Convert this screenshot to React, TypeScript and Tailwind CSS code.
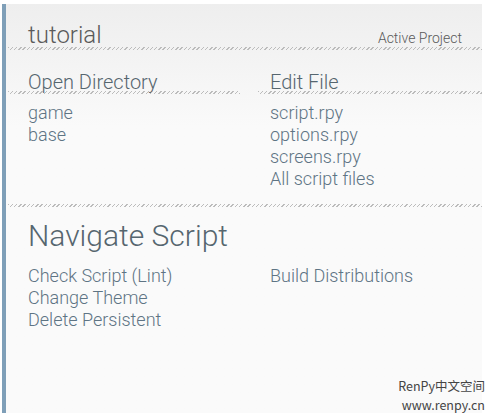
import React from "react";

const hatch =
  "h-[3px] bg-[repeating-linear-gradient(135deg,#bcbcbc_0px,#bcbcbc_1px,transparent_1px,transparent_3px)]";

export default function App() {
  const font = { fontFamily: "Roboto, 'Noto Sans', sans-serif" };
  return (
    <div className="w-[488px] h-[417px] bg-white relative overflow-hidden" style={font}>
      <div className="flex pt-[4px] pl-[2px]">
        <div className="w-[4px] h-[409px] bg-[#7f9fb8]" />
        <div className="w-[476px] h-[409px] bg-gradient-to-b from-[#eeeeee] to-[#fafafa] from-0% to-30% flex flex-col font-light">
          <div className="flex items-end justify-between pl-[22px] pr-[20px] h-[43px]">
            <span className="text-[24px] leading-[24px] text-[#5a5a5a]">tutorial</span>
            <span className="text-[14px] leading-[18px] text-[#5a5a5a]">Active Project</span>
          </div>
          <div className={`ml-[2px] ${hatch}`} />
          <div className="flex mt-[23px]">
            <div className="w-[244px] flex flex-col">
              <span className="pl-[22px] text-[20px] leading-[18px] text-[#56666f]">Open Directory</span>
              <div className={`ml-[2px] w-[232px] ${hatch}`} />
              <div className="pl-[22px] mt-[8px] flex flex-col text-[18px] leading-[22px] text-[#5e7484]">
                <span>game</span>
                <span>base</span>
              </div>
            </div>
            <div className="flex-1 flex flex-col">
              <span className="pl-[20px] text-[20px] leading-[18px] text-[#56666f]">Edit File</span>
              <div className={`ml-[8px] ${hatch}`} />
              <div className="pl-[20px] mt-[8px] flex flex-col text-[18px] leading-[22px] text-[#5e7484]">
                <span>script.rpy</span>
                <span>options.rpy</span>
                <span>screens.rpy</span>
                <span>All script files</span>
              </div>
            </div>
          </div>
          <div className={`mt-[14px] ml-[2px] ${hatch}`} />
          <span className="pl-[22px] mt-[12px] text-[30px] leading-[34px] text-[#56666f]">Navigate Script</span>
          <div className="flex mt-[12px] text-[18px] leading-[22px] text-[#5e7484]">
            <div className="w-[244px] pl-[22px] flex flex-col">
              <span>Check Script (Lint)</span>
              <span>Change Theme</span>
              <span>Delete Persistent</span>
            </div>
            <div className="pl-[20px] flex flex-col">
              <span>Build Distributions</span>
            </div>
          </div>
        </div>
      </div>
      <div
        className="absolute right-[3px] bottom-[3px] flex flex-col items-end text-[12.5px] leading-[19px] text-[#444444] font-normal"
        style={{ fontFamily: "'Noto Sans CJK SC', 'DejaVu Sans', sans-serif" }}
      >
        <span>RenPy中文空间</span>
        <span>www.renpy.cn</span>
      </div>
    </div>
  );
}
